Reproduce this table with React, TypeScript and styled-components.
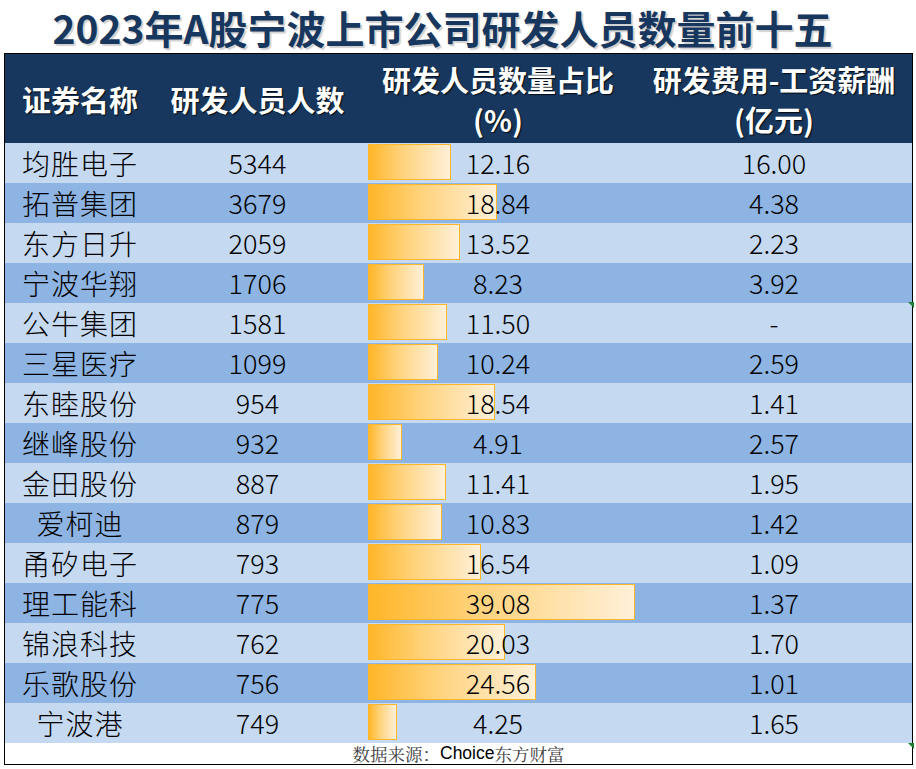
import React from "react";
import styled, { createGlobalStyle } from "styled-components";

const Global = createGlobalStyle`
  html, body { margin: 0; padding: 0; background: #ffffff; }
  body { width: 916px; height: 769px; overflow: hidden; font-family: "Noto Sans CJK SC", "Liberation Sans", sans-serif; }
`;

const Page = styled.div`
  width: 916px;
  height: 769px;
  display: flex;
  flex-direction: column;
  padding-left: 4px;
  box-sizing: border-box;
  background: #ffffff;
`;

const Title = styled.h1`
  margin: 0;
  height: 53px;
  flex-shrink: 0;
  width: 909px;
  display: flex;
  align-items: center;
  justify-content: center;
  padding-right: 32px;
  box-sizing: border-box;
  font-size: 39px;
  font-weight: 700;
  color: #17375e;
  text-shadow: 2px 2px 1px rgba(0, 0, 0, 0.18);
`;

const Table = styled.div`
  position: relative;
  width: 909px;
  height: 712px;
  flex-shrink: 0;
  border: 1px solid #000000;
  box-sizing: border-box;
  display: flex;
  flex-direction: column;
`;

const Cols = "150px 205px 276px 1fr";

const HeaderRow = styled.div`
  height: 89px;
  flex-shrink: 0;
  background: #17375e;
  display: grid;
  grid-template-columns: ${Cols};
`;

const HeadCell = styled.div`
  display: flex;
  flex-direction: column;
  align-items: center;
  justify-content: center;
  color: #ffffff;
  font-size: 29px;
  font-weight: 700;
  line-height: 40px;
  white-space: nowrap;
  text-shadow: 1px 1px 1px rgba(0, 0, 0, 0.8);
`;

const Row = styled.div<{ $alt: boolean }>`
  height: 40px;
  flex-shrink: 0;
  background: ${(p) => (p.$alt ? "#8db4e2" : "#c5d9f1")};
  display: grid;
  grid-template-columns: ${Cols};
`;

const Cell = styled.div`
  display: flex;
  align-items: center;
  justify-content: center;
  font-size: 27px;
  font-weight: 300;
  line-height: 40px;
  color: #000000;
  white-space: nowrap;
`;

const NameCell = styled(Cell)`
  font-size: 28px;
  letter-spacing: 1px;
`;

const BarCell = styled.div`
  display: grid;
  grid-template-columns: 1fr;
  grid-template-rows: 40px;
`;

const Bar = styled.div`
  grid-area: 1 / 1;
  align-self: start;
  justify-self: start;
  margin: 1px 0 0 8px;
  height: 36px;
  box-sizing: border-box;
  border: 1px solid #ffb628;
  background: linear-gradient(to right, #ffb628 0%, #ffd27a 40%, #fff0d8 100%);
`;

const BarValue = styled(Cell)`
  grid-area: 1 / 1;
  position: relative;
`;

const Footer = styled.div`
  flex: 1;
  min-height: 0;
  display: flex;
  align-items: center;
  justify-content: center;
  font-size: 17.5px;
  line-height: 21px;
  color: #404040;
  font-family: "Noto Serif CJK SC", "Noto Sans CJK SC", serif;
`;

const FooterLatin = styled.span`
  font-family: "Liberation Sans", sans-serif;
  color: #000000;
  font-size: 17.5px;
`;

const Marker = styled.div<{ $top: number }>`
  position: absolute;
  right: -2px;
  top: ${(p) => p.$top}px;
  width: 0;
  height: 0;
  border-left: 6px solid transparent;
  border-top: 6px solid #1a7f2e;
`;

type Item = { name: string; count: string; pct: number; fee: string };

const data: Item[] = [
  { name: "均胜电子", count: "5344", pct: 12.16, fee: "16.00" },
  { name: "拓普集团", count: "3679", pct: 18.84, fee: "4.38" },
  { name: "东方日升", count: "2059", pct: 13.52, fee: "2.23" },
  { name: "宁波华翔", count: "1706", pct: 8.23, fee: "3.92" },
  { name: "公牛集团", count: "1581", pct: 11.5, fee: "-" },
  { name: "三星医疗", count: "1099", pct: 10.24, fee: "2.59" },
  { name: "东睦股份", count: "954", pct: 18.54, fee: "1.41" },
  { name: "继峰股份", count: "932", pct: 4.91, fee: "2.57" },
  { name: "金田股份", count: "887", pct: 11.41, fee: "1.95" },
  { name: "爱柯迪", count: "879", pct: 10.83, fee: "1.42" },
  { name: "甬矽电子", count: "793", pct: 16.54, fee: "1.09" },
  { name: "理工能科", count: "775", pct: 39.08, fee: "1.37" },
  { name: "锦浪科技", count: "762", pct: 20.03, fee: "1.70" },
  { name: "乐歌股份", count: "756", pct: 24.56, fee: "1.01" },
  { name: "宁波港", count: "749", pct: 4.25, fee: "1.65" },
];

const MAX = 39.08;
const FULL = 267;

export default function App() {
  return (
    <>
      <Global />
      <Page>
        <Title>2023年A股宁波上市公司研发人员数量前十五</Title>
        <Table>
          <HeaderRow>
            <HeadCell>证券名称</HeadCell>
            <HeadCell>研发人员人数</HeadCell>
            <HeadCell>
              <span>研发人员数量占比</span>
              <span>(%)</span>
            </HeadCell>
            <HeadCell>
              <span>研发费用-工资薪酬</span>
              <span>(亿元)</span>
            </HeadCell>
          </HeaderRow>
          {data.map((d, i) => (
            <Row key={d.name} $alt={i % 2 === 1}>
              <NameCell>{d.name}</NameCell>
              <Cell>{d.count}</Cell>
              <BarCell>
                <Bar style={{ width: `${Math.round((d.pct / MAX) * FULL)}px` }} />
                <BarValue>{d.pct.toFixed(2)}</BarValue>
              </BarCell>
              <Cell>{d.fee}</Cell>
            </Row>
          ))}
          <Footer>
            数据来源：<FooterLatin>Choice</FooterLatin>东方财富
          </Footer>
          <Marker $top={248} />
          <Marker $top={689} />
        </Table>
      </Page>
    </>
  );
}
